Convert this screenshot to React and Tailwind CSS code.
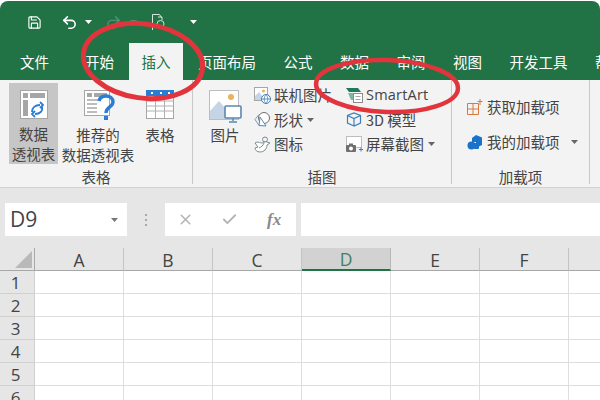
import React from 'react';
import { Save, Undo2, Redo2, X, Check } from 'lucide-react';

const CJK = { fontFamily: '"Noto Sans CJK SC", "Noto Sans", sans-serif' };

const tabs = ['文件', '开始', '插入', '页面布局', '公式', '数据', '审阅', '视图', '开发工具', '帮助'];
// the last column only shows its left part, with no room for a letter
const columns = ['A', 'B', 'C', 'D', 'E', 'F', ''];
const rows = [1, 2, 3, 4, 5, 6];

const Caret = ({ className = '' }) => (
  <svg width="7" height="4" viewBox="0 0 7 4" className={className}>
    <path d="M0 0h7L3.5 4z" fill="currentColor" />
  </svg>
);

const PivotIcon = () => (
  <svg width="28" height="29" viewBox="0 0 28 29">
    <rect x="0.5" y="0.5" width="27" height="28" fill="#fff" stroke="#a6a6a6" />
    <rect x="3" y="3" width="5" height="5" fill="#a6a6a6" />
    <rect x="10" y="3" width="15" height="5" fill="#a6a6a6" />
    <rect x="3" y="10" width="5" height="16" fill="#a6a6a6" />
    <path d="M12 22c0-4 3-7 8-7M20 12l3 3-3 3M22 17c1 4-2 7-7 7M15 21l-3 3 3 3" fill="none" stroke="#2b7cd3" strokeWidth="1.8" />
  </svg>
);

const RecommendedIcon = () => (
  <svg width="32" height="31" viewBox="0 0 32 31">
    <rect x="0.5" y="0.5" width="25" height="25" fill="#fff" stroke="#a6a6a6" />
    <rect x="3" y="3" width="5" height="4" fill="#a6a6a6" />
    <rect x="10" y="3" width="13" height="4" fill="#a6a6a6" />
    <path d="M3 10h14M3 14h10M3 18h10M3 22h10" stroke="#bdbdbd" strokeWidth="2" />
    <path d="M15 11c1-4 4-5 7-5 4 0 7 2 7 6 0 5-7 5-7 11" fill="none" stroke="#2b7cd3" strokeWidth="3.4" />
    <rect x="20" y="26" width="4" height="4" fill="#2b7cd3" />
  </svg>
);

const TableIcon = () => (
  <svg width="28" height="29" viewBox="0 0 28 29">
    <rect x="0.5" y="0.5" width="27" height="28" fill="#fff" stroke="#a6a6a6" />
    <rect x="0" y="0" width="28" height="6" fill="#2b7cd3" />
    <path d="M5 3h2M14 3h2M22 3h2" stroke="#fff" strokeWidth="2" />
    <path d="M1 11h26M1 16h26M1 21h26M9.5 6v22M18.5 6v22" stroke="#b0b0b0" />
  </svg>
);

const PictureIcon = () => (
  <svg width="33" height="33" viewBox="0 0 33 33">
    <rect x="0.5" y="0.5" width="29" height="29" fill="#fff" stroke="#bdbdbd" />
    <circle cx="22" cy="7" r="3" fill="#eab35d" />
    <path d="M1 29V21l9-10 11 13v5z" fill="#c5d5e6" />
    <rect x="16" y="16" width="16" height="12" rx="1" fill="#fff" stroke="#5b87ad" strokeWidth="1.6" />
    <path d="M24 28v3M20 32h8" stroke="#5b87ad" strokeWidth="1.4" />
  </svg>
);

const OnlinePictureIcon = () => (
  <svg width="17" height="17" viewBox="0 0 17 17">
    <rect x="0.5" y="0.5" width="13" height="13" fill="#fff" stroke="#a6a6a6" />
    <circle cx="9.5" cy="4" r="1.5" fill="#eab35d" />
    <path d="M1 13V9l4-4 6 8z" fill="#c5d5e6" />
    <circle cx="12" cy="12" r="4.5" fill="#fff" stroke="#3e7fb8" />
    <path d="M7.5 12h9M12 7.5c-2.4 3-2.4 6 0 9M12 7.5c2.4 3 2.4 6 0 9" fill="none" stroke="#3e7fb8" strokeWidth="0.8" />
  </svg>
);

const ShapesIcon = () => (
  <svg width="17" height="17" viewBox="0 0 17 17" fill="none">
    <path d="M5 3.5 1 8.5l4 6h4" stroke="#7a9cbb" />
    <circle cx="10" cy="7" r="5.5" fill="#fff" stroke="#6f6f6f" />
    <path d="M6 6 12 15l-7-.5z" fill="#fff" stroke="#5b87ad" />
  </svg>
);

const IconsIcon = () => (
  <svg width="17" height="17" viewBox="0 0 17 17" fill="none" stroke="#7b8d8f">
    <circle cx="11" cy="3.5" r="2.5" />
    <path d="M1 7c3-2 5 0 7 0s3-2 5-1l3 1-3 2c0 4-3 7-7 7-3 0-5-2-5-4l3-1z" fill="#fff" />
    <path d="M5 12c2-1 4-2 5-5" />
  </svg>
);

const SmartArtIcon = () => (
  <svg width="17" height="15" viewBox="0 0 17 15">
    <path d="M0 0h12l3 4H3z" fill="#1f7a57" />
    <path d="M2 5h7v7H5z" fill="#7fb4a0" />
    <rect x="7.5" y="5.5" width="9" height="9" fill="#fff" stroke="#8c8c8c" />
    <path d="M9.5 8.5h5M9.5 11.5h5" stroke="#a6a6a6" />
  </svg>
);

const ModelIcon = () => (
  <svg width="16" height="15" viewBox="0 0 16 15" fill="none" stroke="#3e7fb8" strokeWidth="1.2">
    <path d="M8 14 1.5 11V3.5L8 1l6.5 2.500V11zM1.5 3.5 8 6.500l6.500-3M8 6.500V14" />
  </svg>
);

const ScreenshotIcon = () => (
  <svg width="18" height="17" viewBox="0 0 18 17">
    <rect x="0.5" y="0.5" width="15" height="11" fill="#fff" stroke="#bdbdbd" />
    <rect x="0" y="9" width="10" height="7" rx="1" fill="#6f6f6f" />
    <rect x="3" y="7.5" width="4" height="2" fill="#6f6f6f" />
    <circle cx="5" cy="12.5" r="2" fill="#fff" />
    <path d="M13 13.5h4M15 11.5v4" stroke="#3e7fb8" />
  </svg>
);

const GetAddinIcon = () => (
  <svg width="16" height="16" viewBox="0 0 16 16" fill="none" stroke="#d8793f">
    <path d="M.5 4.5h11v11H.5zM6 4.5v11M.5 10h11M13 0v6M10.5 2.500h5" />
  </svg>
);

const MyAddinIcon = () => (
  <svg width="16" height="16" viewBox="0 0 16 16">
    <path d="M9 1l6 2.5V11l-4 2-2-1V8H5V4z" fill="#1a73c9" />
    <circle cx="4.5" cy="11.5" r="4" fill="#1a73c9" />
    <rect x="7" y="9" width="5" height="6" rx="1" fill="#1a73c9" />
  </svg>
);

const SmallButton = ({ icon, label, caret, sans }) => (
  <div className="flex h-[24.5px] items-center text-[#444]">
    <div className="flex w-[20px] shrink-0 items-center">{icon}</div>
    <span className={sans ? "text-[14.5px] tracking-[0.2px] [font-family:'Open_Sans',sans-serif]" : 'text-[14.5px]'}>{label}</span>
    {caret && <Caret className="ml-[4px] text-[#666]" />}
  </div>
);

const RibbonGroup = ({ label, className, children }) => (
  <section className={`flex shrink-0 flex-col ${className}`}>
    <div className="flex h-[89px]">{children}</div>
    <div className="flex h-[15px] items-center justify-center text-[14.5px] text-[#444]">{label}</div>
  </section>
);

export default function App() {
  return (
    <div className="relative h-[400px] w-[600px] overflow-hidden bg-white pt-[1px]" style={CJK}>
      {/* Title bar and tabs */}
      <header className="h-[79px] rounded-t-lg bg-[#217346]">
        <div className="flex h-[42px] items-center pl-[27px] text-white">
          <Save size={15} strokeWidth={1.8} />
          <Undo2 size={17} strokeWidth={2.2} className="ml-[19px]" />
          <Caret className="ml-[7px]" />
          <Redo2 size={17} strokeWidth={2} className="ml-[13px] text-[#4f9470]" />
          <Caret className="ml-[8px] text-[#4f9470]" />
          <svg width="14" height="17" viewBox="0 0 14 17" fill="none" stroke="#d6e6dc" className="ml-[15px]">
            <path d="M.5 16V.5h7l2 3" />
            <circle cx="8.5" cy="10" r="3.5" />
            <path d="M6 3h4v3" />
          </svg>
          <Caret className="ml-[24px]" />
        </div>
        <nav className="flex h-[37px] gap-[2.5px] overflow-hidden pl-[7.5px] text-[14.5px] text-white">
          {tabs.map((tab, i) => (
            <div
              key={tab}
              className={`flex shrink-0 items-center px-[12.5px] ${i === 1 ? 'ml-[8.5px]' : ''} ${i === 2 ? 'bg-[#f3f3f3] text-[#217346]' : ''}`}
            >
              {tab}
            </div>
          ))}
        </nav>
      </header>

      {/* Ribbon */}
      <div className="flex h-[108px] border-b border-[#d2d2d2] bg-[#f3f3f3] pb-[3px]">
        <RibbonGroup label="表格" className="w-[193px] border-r border-[#c8c8c8]">
          <div className="mt-[3px] ml-[9px] flex h-[81px] w-[49px] flex-col items-center bg-[#c6c6c6] pt-[7px] text-center text-[14.5px] leading-[20px] text-[#444]">
            <div className="h-[35px]"><PivotIcon /></div>
            <div>数据</div>
            <div className="whitespace-nowrap">透视表</div>
          </div>
          <div className="mt-[3px] flex w-[80px] flex-col items-center pt-[7px] text-center text-[14.5px] leading-[20px] text-[#444]">
            <div className="h-[35px] pl-[4px]"><RecommendedIcon /></div>
            <div>推荐的</div>
            <div className="whitespace-nowrap">数据透视表</div>
          </div>
          <div className="mt-[3px] flex w-[44px] flex-col items-center pt-[7px] text-center text-[14.5px] leading-[20px] text-[#444]">
            <div className="h-[35px]"><TableIcon /></div>
            <div>表格</div>
          </div>
        </RibbonGroup>

        <RibbonGroup label="插图" className="w-[259px] border-r border-[#c8c8c8]">
          <div className="mt-[3px] ml-[14px] flex w-[36px] flex-col items-center pt-[7px] text-[14.5px] leading-[20px] text-[#444]">
            <div className="h-[35px]"><PictureIcon /></div>
            <div>图片</div>
          </div>
          <div className="ml-[11px] w-[92px] pt-[3px]">
            <SmallButton icon={<OnlinePictureIcon />} label="联机图片" />
            <SmallButton icon={<ShapesIcon />} label="形状" caret />
            <SmallButton icon={<IconsIcon />} label="图标" />
          </div>
          <div className="pt-[3px]">
            <SmallButton icon={<SmartArtIcon />} label="SmartArt" sans />
            <SmallButton icon={<ModelIcon />} label="3D 模型" />
            <SmallButton icon={<ScreenshotIcon />} label="屏幕截图" caret />
          </div>
        </RibbonGroup>

        <RibbonGroup label="加载项" className="w-[138px] border-r border-[#c8c8c8]">
          <div className="pt-[9px] pl-[15px] text-[14.5px] text-[#444]">
            <div className="flex h-[35px] items-center gap-[4px]">
              <GetAddinIcon />
              <span>获取加载项</span>
            </div>
            <div className="flex h-[35px] items-center gap-[4px]">
              <MyAddinIcon />
              <span>我的加载项</span>
              <Caret className="ml-[7px] text-[#666]" />
            </div>
          </div>
        </RibbonGroup>
      </div>

      {/* Formula bar and sheet */}
      <div className="bg-[#e6e6e6]">
        <div className="flex h-[60px] items-start pt-[15px] pl-[5px]">
          <div className="flex h-[33px] w-[122px] items-center justify-between bg-white pr-[9px] pl-[5px] text-[21px] text-[#444] [font-family:'Open_Sans',sans-serif]">
            <span>D9</span>
            <Caret className="text-[#777]" />
          </div>
          <div className="flex h-[33px] w-[38px] flex-col items-center justify-center gap-[3px]">
            <i className="h-[2px] w-[2px] bg-[#a8a8a8]" />
            <i className="h-[2px] w-[2px] bg-[#a8a8a8]" />
            <i className="h-[2px] w-[2px] bg-[#a8a8a8]" />
          </div>
          <div className="flex h-[33px] w-[131px] items-center bg-white text-[#b4b4b4]">
            <X size={17} strokeWidth={2.2} className="ml-[12px]" />
            <Check size={17} strokeWidth={2.6} className="ml-[27px]" />
            <span className="ml-[29px] text-[17px] font-bold text-[#8a8a8a] italic [font-family:'Liberation_Serif',serif]">fx</span>
          </div>
          <div className="ml-[5px] h-[33px] flex-1 bg-white" />
        </div>

        <div className="grid grid-cols-[35px_repeat(6,89px)_32px] bg-white [font-family:'Open_Sans',sans-serif]">
          <div className="flex h-[23px] items-end justify-end border-r border-b border-[#a8a8a8] bg-[#e6e6e6] pr-[2px] pb-[2px]">
            <svg width="17" height="17" viewBox="0 0 17 17">
              <path d="M17 0v17H0z" fill="#b9b9b9" />
            </svg>
          </div>
          {columns.map((col) => (
            <div
              key={col}
              className={`flex h-[23px] items-center justify-center border-r pt-[2px] text-[17.5px] ${
                col === 'D'
                  ? 'border-b-2 border-r-[#b8b8b8] border-b-[#217346] bg-[#d2d2d2] text-[#3f7f63]'
                  : 'border-b border-r-[#c4c4c4] border-b-[#a8a8a8] bg-[#e6e6e6] text-[#444]'
              }`}
            >
              {col}
            </div>
          ))}
          {rows.map((row) => (
            <React.Fragment key={row}>
              <div className="flex h-[23px] items-center justify-center border-r border-b border-[#d0d0d0] bg-[#e6e6e6] pt-[2px] pr-[3px] text-[17px] text-[#444]">
                {row}
              </div>
              {columns.map((col) => (
                <div key={col} className="h-[23px] border-r border-b border-[#dedede]" />
              ))}
            </React.Fragment>
          ))}
        </div>
      </div>

      {/* Hand-drawn red rings over the ribbon */}
      <svg width="600" height="400" viewBox="0 0 600 400" fill="none" className="absolute top-0 left-0">
        <ellipse cx="143" cy="61" rx="60" ry="37" transform="rotate(8 143 61)" stroke="#e2343c" strokeWidth="5" />
        <ellipse cx="387" cy="86" rx="71" ry="26" transform="rotate(2 387 86)" stroke="#e2343c" strokeWidth="4.5" />
      </svg>
    </div>
  );
}
